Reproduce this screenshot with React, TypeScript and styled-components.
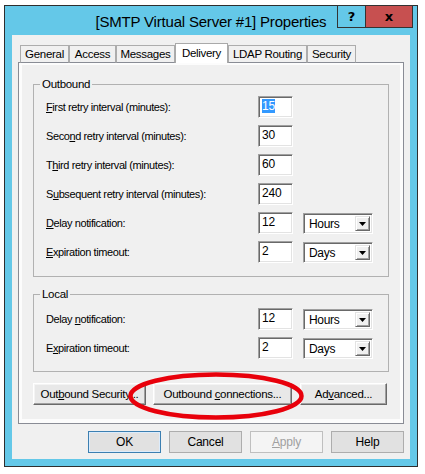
import React from "react";
import styled, { createGlobalStyle } from "styled-components";

const Global = createGlobalStyle`
  html, body { margin: 0; padding: 0; background: #ffffff; }
  body { font-family: "Liberation Sans", Arial, sans-serif; }
`;

const Stage = styled.div`
  padding: 5px 0 0 4px;
`;

const Window = styled.div`
  box-sizing: border-box;
  width: 414px;
  height: 462px;
  border: 1px solid #2e2e2e;
  background: #64c8e8;
  padding: 0 7px 7px 7px;
  display: flex;
  flex-direction: column;
`;

const TitleBar = styled.div`
  height: 29px;
  margin: 0 -7px;
  display: grid;
  grid-template-columns: 1fr auto 1fr;
  align-items: center;
`;

const TitleText = styled.div`
  grid-column: 2;
  font-family: "Liberation Sans", Arial, sans-serif;
  font-size: 15px;
  letter-spacing: -0.2px;
  color: #000;
  padding-top: 1px;
  white-space: nowrap;
`;

const TitleButtons = styled.div`
  grid-column: 3;
  justify-self: end;
  align-self: start;
  margin-top: -1px;
  margin-right: 4px;
  display: flex;
`;

const CaptionButton = styled.div<{ $w: number; $bg: string }>`
  box-sizing: border-box;
  width: ${(p) => p.$w}px;
  height: 23px;
  border: 1px solid #333;
  margin-left: -1px;
  background: ${(p) => p.$bg};
  display: flex;
  align-items: center;
  justify-content: center;
  font-family: "DejaVu Sans", sans-serif;
  font-weight: bold;
  font-size: 13px;
  color: #000;
`;

const Client = styled.div`
  box-sizing: border-box;
  background: #f0f0f0;
  height: 424px;
  padding: 8px 6px 0 6px;
  display: flex;
  flex-direction: column;
  font-family: "Liberation Sans", Arial, sans-serif;
  font-size: 11px;
  letter-spacing: -0.4px;
  color: #000;
`;

const TabStrip = styled.div`
  display: flex;
  align-items: flex-end;
  height: 20px;
  padding-left: 2px;
  margin-bottom: -1px;
  position: relative;
  z-index: 1;
  font-size: 11.5px;
  letter-spacing: -0.3px;
`;

const Tab = styled.div<{ $w: number; $active?: boolean }>`
  box-sizing: border-box;
  width: ${(p) => p.$w}px;
  height: ${(p) => (p.$active ? 20 : 18)}px;
  border: 1px solid ${(p) => (p.$active ? "#a9a9a9" : "#acacac")};
  border-bottom: ${(p) => (p.$active ? "none" : "1px solid #898c95")};
  background: ${(p) => (p.$active ? "#ffffff" : "#f0f0f0")};
  display: flex;
  align-items: center;
  justify-content: center;
  padding-bottom: ${(p) => (p.$active ? 2 : 0)}px;
  white-space: nowrap;
`;

const Panel = styled.div`
  box-sizing: border-box;
  border: 1px solid #898c95;
  background: #fcfcfc;
  padding: 2px 3px 4px 3px;
`;

const Page = styled.div`
  position: relative;
  background: #f0f0f0;
  height: 354px;
  box-sizing: border-box;
  padding: 12px 11px 0 11px;
  display: flex;
  flex-direction: column;
`;

const Group = styled.fieldset<{ $pt: number; $pb: number; $mt: number }>`
  box-sizing: border-box;
  margin: ${(p) => p.$mt}px 0 0 0;
  width: 356px;
  min-width: 0;
  border: 1px solid #b1b1b1;
  padding: ${(p) => p.$pt}px 0 ${(p) => p.$pb}px 12px;
`;

const Legend = styled.legend`
  line-height: 14px;
  padding: 0 2px;
  margin-left: -6px;
  font-size: 11.5px;
  letter-spacing: -0.3px;
`;

const Form = styled.div`
  display: grid;
  grid-template-columns: 212px 35px 80px;
  row-gap: 7px;
  align-items: center;
`;

const Label = styled.div`
  grid-column: 1;
  white-space: nowrap;
  padding-bottom: 1px;
`;

const Key = styled.span`
  text-decoration: underline;
`;

const TextBox = styled.div`
  grid-column: 2;
  box-sizing: border-box;
  height: 22px;
  background: #fff;
  border: 1px solid;
  border-color: #a0a0a0 #ffffff #ffffff #a0a0a0;
  box-shadow: inset 1px 1px #696969, inset -1px -1px #e3e3e3;
  padding: 3px 0 0 3px;
  line-height: 13px;
  font-size: 12px;
  letter-spacing: -0.2px;
`;

const Selected = styled.span`
  background: #3399ff;
  color: #fff;
`;

const Combo = styled.div`
  grid-column: 3;
  margin-left: 10px;
  box-sizing: border-box;
  height: 21px;
  background: #fff;
  border: 1px solid;
  border-color: #a0a0a0 #ffffff #ffffff #a0a0a0;
  box-shadow: inset 1px 1px #696969, inset -1px -1px #e3e3e3;
  display: flex;
  align-items: stretch;
  padding: 2px;
  margin-top: 1px;
`;

const ComboText = styled.div`
  flex: 1;
  padding: 1px 0 0 3px;
  font-size: 12px;
  letter-spacing: -0.3px;
`;

const DropButton = styled.div`
  width: 15px;
  box-sizing: border-box;
  background: #f0f0f0;
  border: 1px solid;
  border-color: #e3e3e3 #696969 #696969 #e3e3e3;
  box-shadow: inset 1px 1px #ffffff, inset -1px -1px #a0a0a0;
  display: flex;
  align-items: center;
  justify-content: center;
`;

const ButtonRow = styled.div`
  display: flex;
  margin-top: 11px;
`;

const RaisedButton = styled.div<{ $w: number; $ml: number }>`
  box-sizing: border-box;
  width: ${(p) => p.$w}px;
  margin-left: ${(p) => p.$ml}px;
  height: 22px;
  background: #e8e8e8;
  border: 1px solid;
  border-color: #ffffff #696969 #696969 #ffffff;
  box-shadow: inset -1px -1px #a0a0a0, inset 1px 1px #f4f4f4;
  display: flex;
  align-items: center;
  justify-content: center;
  white-space: nowrap;
  padding-bottom: 1px;
  font-size: 11.5px;
  letter-spacing: -0.3px;
`;

const Annotation = styled.svg`
  position: absolute;
  left: 106px;
  top: 307px;
  overflow: visible;
  pointer-events: none;
`;

const DialogButtons = styled.div`
  display: flex;
  justify-content: flex-end;
  gap: 8px;
  margin-top: 7px;
`;

const DialogButton = styled.div<{ $default?: boolean; $disabled?: boolean }>`
  box-sizing: border-box;
  width: 73px;
  height: 22px;
  background: ${(p) => (p.$disabled ? "#f4f4f4" : "#e1e1e1")};
  border: 1px solid
    ${(p) => (p.$default ? "#3c7fb1" : p.$disabled ? "#bfbfbf" : "#adadad")};
  box-shadow: ${(p) => (p.$default ? "inset 0 0 0 1px #dcecfc" : "none")};
  color: ${(p) => (p.$disabled ? "#a0a0a0" : "#000")};
  display: flex;
  align-items: center;
  justify-content: center;
  font-size: 12px;
  letter-spacing: -0.2px;
  padding-bottom: 1px;
`;

const Triangle = () => (
  <svg width="7" height="4" viewBox="0 0 7 4">
    <path d="M0 0H7L3.5 4Z" fill="#000" />
  </svg>
);

type Row = {
  label: React.ReactNode;
  value: React.ReactNode;
  unit?: string;
};

const outbound: Row[] = [
  { label: <><Key>F</Key>irst retry interval (minutes):</>, value: <Selected>15</Selected> },
  { label: <>Seco<Key>n</Key>d retry interval (minutes):</>, value: "30" },
  { label: <>T<Key>h</Key>ird retry interval (minutes):</>, value: "60" },
  { label: <>S<Key>u</Key>bsequent retry interval (minutes):</>, value: "240" },
  { label: <><Key>D</Key>elay notification:</>, value: "12", unit: "Hours" },
  { label: <><Key>E</Key>xpiration timeout:</>, value: "2", unit: "Days" },
];

const local: Row[] = [
  { label: <>Delay <Key>n</Key>otification:</>, value: "12", unit: "Hours" },
  { label: <>E<Key>x</Key>piration timeout:</>, value: "2", unit: "Days" },
];

const tabs = [
  { name: "General", w: 49 },
  { name: "Access", w: 47 },
  { name: "Messages", w: 59 },
  { name: "Delivery", w: 53, active: true },
  { name: "LDAP Routing", w: 79 },
  { name: "Security", w: 49 },
];

const Rows = ({ rows }: { rows: Row[] }) => (
  <Form>
    {rows.map((r, i) => (
      <React.Fragment key={i}>
        <Label>{r.label}</Label>
        <TextBox>{r.value}</TextBox>
        {r.unit && (
          <Combo>
            <ComboText>{r.unit}</ComboText>
            <DropButton>
              <Triangle />
            </DropButton>
          </Combo>
        )}
      </React.Fragment>
    ))}
  </Form>
);

export default function App() {
  return (
    <>
      <Global />
      <Stage>
        <Window>
          <TitleBar>
            <TitleText>[SMTP Virtual Server #1] Properties</TitleText>
            <TitleButtons>
              <CaptionButton $w={29} $bg="#64c8e8">?</CaptionButton>
              <CaptionButton $w={48} $bg="#c75050">x</CaptionButton>
            </TitleButtons>
          </TitleBar>
          <Client>
            <TabStrip>
              {tabs.map((t) => (
                <Tab key={t.name} $w={t.w} $active={t.active}>
                  {t.name}
                </Tab>
              ))}
            </TabStrip>
            <Panel>
              <Page>
                <Group $pt={5} $pb={13} $mt={0}>
                  <Legend>Outbound</Legend>
                  <Rows rows={outbound} />
                </Group>
                <Group $pt={7} $pb={12} $mt={10}>
                  <Legend>Local</Legend>
                  <Rows rows={local} />
                </Group>
                <ButtonRow>
                  <RaisedButton $w={113} $ml={0}>
                    <span>Out<Key>b</Key>ound Security...</span>
                  </RaisedButton>
                  <RaisedButton $w={139} $ml={7}>
                    <span>Outbound <Key>c</Key>onnections...</span>
                  </RaisedButton>
                  <RaisedButton $w={87} $ml={8}>
                    <span>Ad<Key>v</Key>anced...</span>
                  </RaisedButton>
                </ButtonRow>
                <Annotation width="176" height="48" viewBox="0 0 176 48">
                  <ellipse
                    cx="88"
                    cy="24"
                    rx="85.5"
                    ry="21.5"
                    fill="none"
                    stroke="#e8000b"
                    strokeWidth="4.5"
                  />
                </Annotation>
              </Page>
            </Panel>
            <DialogButtons>
              <DialogButton $default>OK</DialogButton>
              <DialogButton>Cancel</DialogButton>
              <DialogButton $disabled>
                <span><Key>A</Key>pply</span>
              </DialogButton>
              <DialogButton>Help</DialogButton>
            </DialogButtons>
          </Client>
        </Window>
      </Stage>
    </>
  );
}
